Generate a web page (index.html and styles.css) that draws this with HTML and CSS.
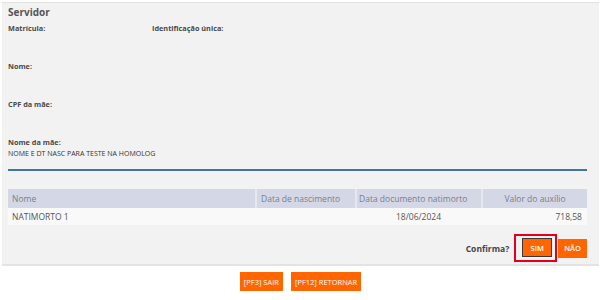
FILE: index.html
```html
<!DOCTYPE html>
<html lang="pt-BR">
<head>
    <meta charset="UTF-8">
    <title>Auxílio natalidade - Confirmação</title>
    <link rel="stylesheet" href="styles.css">
</head>
<body>
    <div class="panel">
        <h2 class="panel-title">Servidor</h2>
        <div class="field-row">
            <div class="field col-matricula">
                <div class="label">Matrícula:</div>
                <div class="value"></div>
            </div>
            <div class="field">
                <div class="label">Identificação única:</div>
                <div class="value"></div>
            </div>
        </div>
        <div class="field">
            <div class="label">Nome:</div>
            <div class="value"></div>
        </div>
        <div class="field">
            <div class="label">CPF da mãe:</div>
            <div class="value"></div>
        </div>
        <div class="field">
            <div class="label">Nome da mãe:</div>
            <div class="value">NOME E DT NASC PARA TESTE NA HOMOLOG</div>
        </div>

        <div class="divider"></div>

        <table class="grid">
            <colgroup>
                <col class="c-nome">
                <col class="c-nasc">
                <col class="c-doc">
                <col>
            </colgroup>
            <thead>
                <tr>
                    <th>Nome</th>
                    <th>Data de nascimento</th>
                    <th class="tight">Data documento natimorto</th>
                    <th class="center">Valor do auxílio</th>
                </tr>
            </thead>
            <tbody>
                <tr>
                    <td>NATIMORTO 1</td>
                    <td></td>
                    <td class="center">18/06/2024</td>
                    <td class="right">718,58</td>
                </tr>
            </tbody>
        </table>

        <div class="confirm">
            <span class="confirm-label">Confirma?</span>
            <span class="focus-ring"><button class="btn btn-active">SIM</button></span>
            <button class="btn">NÃO</button>
        </div>
    </div>

    <div class="footer">
        <button class="btn btn-footer">[PF3] SAIR</button>
        <button class="btn btn-footer">[PF12] RETORNAR</button>
    </div>
</body>
</html>
```

FILE: styles.css
```css
body {
    margin: 0;
    font-family: "Open Sans", "Noto Sans", sans-serif;
    color: #444;
    background: #fff;
}
.panel {
    margin: 2px 2px 0;
    padding: 2px 12px 2px 6px;
    background: #f2f2f2;
    border-top: 1px solid #e3e3e3;
    border-bottom: 2px solid #e3e3e3;
}
.panel-title {
    margin: 0;
    font-size: 10px;
    line-height: 14px;
    font-weight: 700;
    color: #555;
}
.field-row {
    display: flex;
}
.col-matricula {
    width: 144px;
}
.field {
    margin-top: 3px;
}
.label {
    font-size: 7.3px;
    line-height: 12px;
    font-weight: 700;
    color: #4a4a4a;
}
.value {
    height: 23px;
    font-size: 7px;
    line-height: 12px;
    color: #333;
}
.divider {
    margin-top: -2px;
    height: 2px;
    background: #3f77ab;
}
.grid {
    width: 100%;
    margin-top: 18px;
    border-collapse: collapse;
    table-layout: fixed;
    font-size: 8.5px;
}
.c-nome { width: 248px; }
.c-nasc { width: 100px; }
.c-doc { width: 126px; }
.grid th {
    height: 19px;
    padding: 0 4px;
    background: #d4d8e6;
    color: #7a7f8c;
    font-weight: 400;
    text-align: left;
    white-space: nowrap;
    border-left: 2px solid #e6e8ef;
}
.grid th:first-child,
.grid td:first-child {
    border-left: none;
}
.grid th.tight { padding-left: 2px; }
.grid td {
    height: 17px;
    padding: 0 5px 0 4px;
    background: #f9f9f9;
    color: #555;
}
.grid .center { text-align: center; }
.grid .right { text-align: right; }
.confirm {
    display: flex;
    justify-content: flex-end;
    align-items: center;
    margin-top: 9px;
}
.confirm-label {
    margin-right: 5px;
    font-size: 8.5px;
    font-weight: 700;
    color: #444;
}
.focus-ring {
    display: inline-flex;
    padding: 2px 3px 3px 6px;
    border: 2px solid #e2001a;
    margin-right: 1px;
}
.btn {
    height: 19px;
    padding: 0 6px;
    border: none;
    background: #ff6600;
    color: #fff;
    font-family: "Open Sans", "Noto Sans", sans-serif;
    font-size: 7.5px;
    font-weight: 600;
    cursor: pointer;
}
.btn-active {
    width: 30px;
    padding: 0;
    border: 1px solid #3a3a3a;
}
.footer {
    display: flex;
    justify-content: center;
    gap: 8px;
    padding-top: 6px;
}
.btn-footer {
    font-weight: 400;
    padding: 0 4px;
}
```
